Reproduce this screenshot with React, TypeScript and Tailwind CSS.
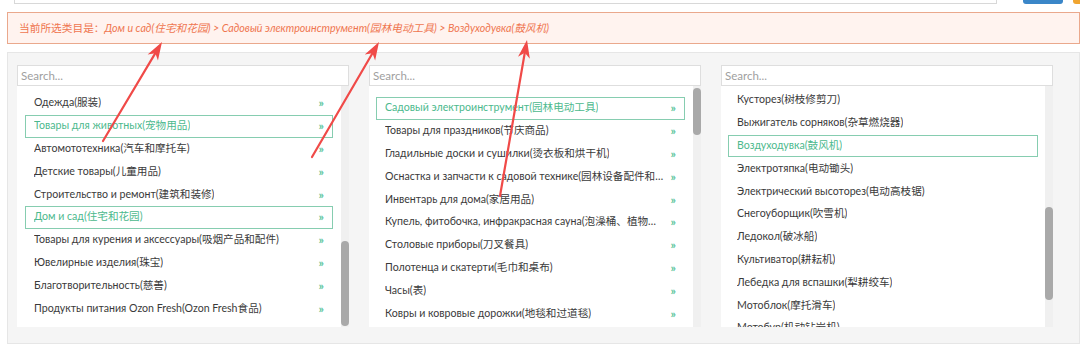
const font = { fontFamily: 'Lato, "Noto Sans CJK SC", sans-serif' };

type Item = { label: string; active?: boolean };

const col1: Item[] = [
  { label: "Одежда(服装)" },
  { label: "Товары для животных(宠物用品)", active: true },
  { label: "Автомототехника(汽车和摩托车)" },
  { label: "Детские товары(儿童用品)" },
  { label: "Строительство и ремонт(建筑和装修)" },
  { label: "Дом и сад(住宅和花园)", active: true },
  { label: "Товары для курения и аксессуары(吸烟产品和配件)" },
  { label: "Ювелирные изделия(珠宝)" },
  { label: "Благотворительность(慈善)" },
  { label: "Продукты питания Ozon Fresh(Ozon Fresh食品)" },
];

const col2: Item[] = [
  { label: "Садовый электроинструмент(园林电动工具)", active: true },
  { label: "Товары для праздников(节庆商品)" },
  { label: "Гладильные доски и сушилки(烫衣板和烘干机)" },
  { label: "Оснастка и запчасти к садовой технике(园林设备配件和零件)" },
  { label: "Инвентарь для дома(家居用品)" },
  { label: "Купель, фитобочка, инфракрасная сауна(泡澡桶、植物蒸汽桶)" },
  { label: "Столовые приборы(刀叉餐具)" },
  { label: "Полотенца и скатерти(毛巾和桌布)" },
  { label: "Часы(表)" },
  { label: "Ковры и ковровые дорожки(地毯和过道毯)" },
];

const col3: Item[] = [
  { label: "Кусторез(树枝修剪刀)" },
  { label: "Выжигатель сорняков(杂草燃烧器)" },
  { label: "Воздуходувка(鼓风机)", active: true },
  { label: "Электротяпка(电动锄头)" },
  { label: "Электрический высоторез(电动高枝锯)" },
  { label: "Снегоуборщик(吹雪机)" },
  { label: "Ледокол(破冰船)" },
  { label: "Культиватор(耕耘机)" },
  { label: "Лебедка для вспашки(犁耕绞车)" },
  { label: "Мотоблок(摩托滑车)" },
  { label: "Мотобур(机动钻岩机)" },
];

function Panel({
  items,
  arrows,
  padTop,
  padX,
  thumbTop,
  thumbH,
}: {
  items: Item[];
  arrows: boolean;
  padTop: string;
  padX: string;
  thumbTop: string;
  thumbH: string;
}) {
  return (
    <div className="w-[332px] flex flex-col">
      <div className="h-[21px] bg-white border border-[#dedede] flex items-center px-[3px] text-[11.5px] text-[#a0a0a0]">
        Search...
      </div>
      <div className="h-[241px] bg-white flex">
        <div className={`flex-1 min-w-0 overflow-hidden ${padTop} ${padX}`}>
          {items.map((it, i) => (
            <div
              key={i}
              className={`h-[22.8px] flex items-center justify-between pl-[8px] pr-[8px] text-[10.6px] border ${
                it.active ? "border-[#86cdb0] text-[#4cb98d]" : "border-transparent text-[#3a3a3a]"
              }`}
            >
              <span className="truncate min-w-0">{it.label}</span>
              {arrows && <span className="text-[#5cc59c] ml-[6px] shrink-0 text-[12px] font-bold">»</span>}
            </div>
          ))}
        </div>
        <div className="w-[8px] bg-[#f0f0f0] shrink-0">
          <div className={`w-[8px] rounded-[4px] bg-[#a9a9a9] ${thumbTop} ${thumbH}`} />
        </div>
      </div>
    </div>
  );
}

function Arrow({ x1, y1, x2, y2 }: { x1: number; y1: number; x2: number; y2: number }) {
  const dx = x2 - x1;
  const dy = y2 - y1;
  const len = Math.hypot(dx, dy);
  const ux = dx / len;
  const uy = dy / len;
  const px = -uy;
  const py = ux;
  const hl = 18;
  const hw = 6;
  const bx = x2 - ux * hl;
  const by = y2 - uy * hl;
  const nx = x2 - ux * (hl - 5);
  const ny = y2 - uy * (hl - 5);
  const pts = `${x2},${y2} ${bx + px * hw},${by + py * hw} ${nx},${ny} ${bx - px * hw},${by - py * hw}`;
  return (
    <g>
      <line x1={x1} y1={y1} x2={nx} y2={ny} stroke="#f04a48" strokeWidth={2.2} strokeLinecap="round" />
      <polygon points={pts} fill="#f04a48" />
    </g>
  );
}

export default function App() {
  return (
    <div className="w-[1080px] h-[357px] bg-white relative overflow-hidden" style={font}>
      <div className="h-[4px] flex items-end">
        <div className="ml-[14px] w-[983px] h-[24px] shrink-0 bg-white border border-[#d8d8d8]" />
        <div className="ml-[26px] w-[40px] h-[24px] shrink-0 rounded-[3px] bg-[#3a86c8]" />
        <div className="ml-[10px] w-[40px] h-[24px] shrink-0 rounded-[3px] bg-[#f0a530]" />
      </div>

      <div className="mt-[8px] ml-[7px] h-[32px] bg-[#fff3ef] border border-[#eaa88c] flex items-center pl-[11px] text-[10.7px] text-[#ef7650] whitespace-nowrap">
        <span>当前所选类目是：</span>
        <span className="italic">
          Дом и сад(住宅和花园) &gt; Садовый электроинструмент(园林电动工具) &gt; Воздуходувка(鼓风机)
        </span>
      </div>

      <div className="mt-[8px] ml-[7px] h-[292px] bg-[#f5f5f5] border border-[#e6e6e6] pt-[12px] pl-[9px] flex gap-[20px]">
        <Panel items={col1} arrows padTop="pt-[6px]" padX="pl-[8px] pr-[8px]" thumbTop="mt-[155px]" thumbH="h-[85px]" />
        <Panel items={col2} arrows padTop="pt-[11px]" padX="pl-[7px] pr-[8px]" thumbTop="mt-[2px]" thumbH="h-[47px]" />
        <Panel items={col3} arrows={false} padTop="pt-[3px]" padX="pl-[7px] pr-[7px]" thumbTop="mt-[121px]" thumbH="h-[93px]" />
      </div>

      <svg className="absolute inset-0 pointer-events-none" width={1080} height={357}>
        <Arrow x1={103} y1={141} x2={162} y2={42} />
        <Arrow x1={312} y1={157} x2={379} y2={42} />
        <Arrow x1={500} y1={196} x2={527} y2={40} />
      </svg>
    </div>
  );
}
